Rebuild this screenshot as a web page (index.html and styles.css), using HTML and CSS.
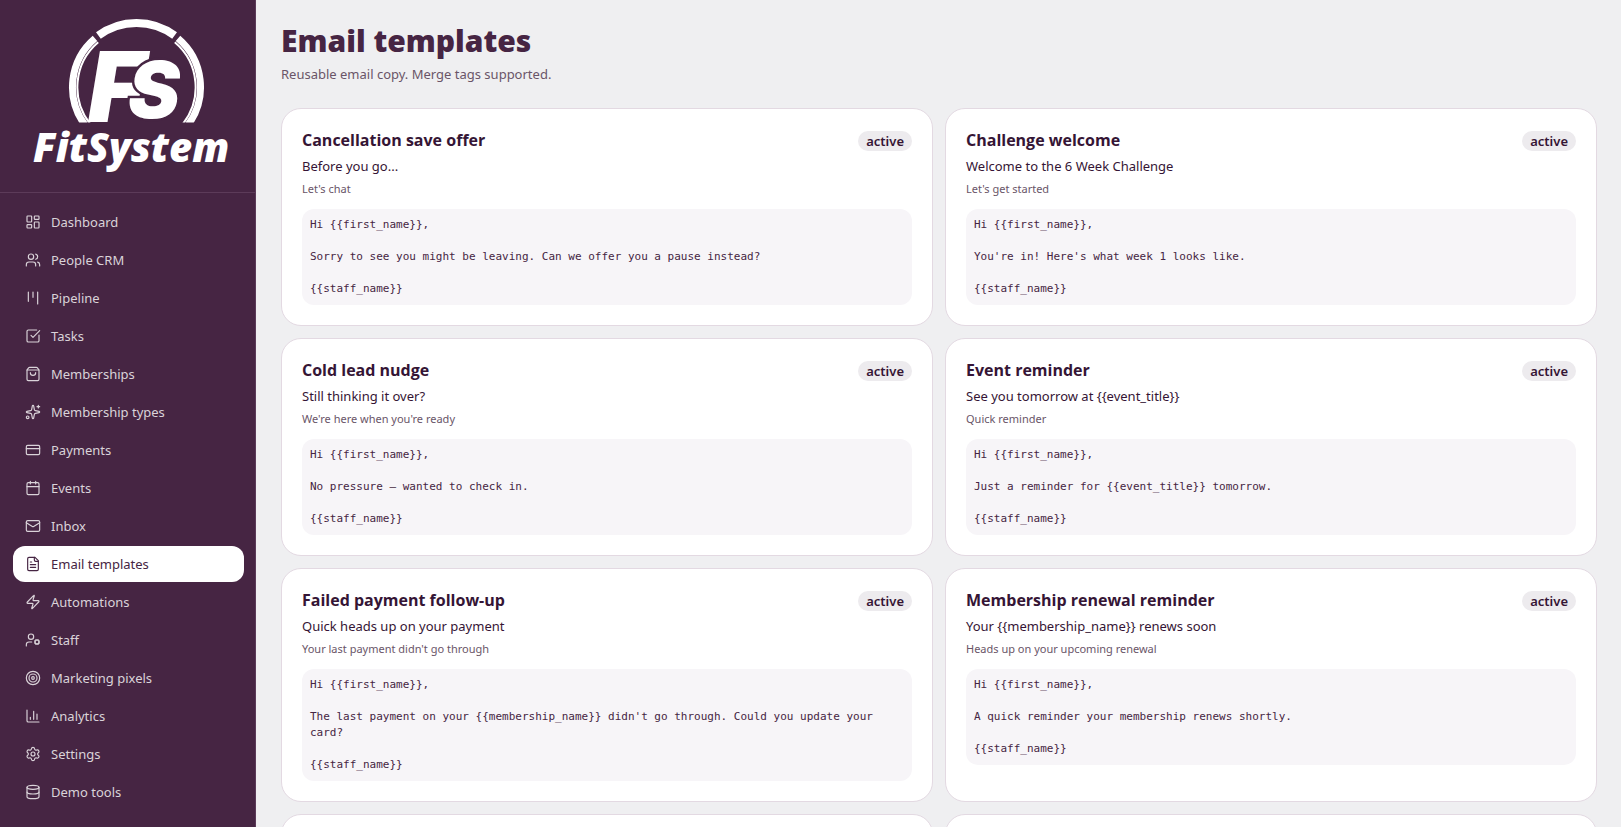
FILE: index.html
```html
<!DOCTYPE html>
<html lang="en">
<head>
    <meta charset="UTF-8">
    <meta name="viewport" content="width=device-width, initial-scale=1.0">
    <title>Email templates - FitSystem</title>
    <link rel="stylesheet" href="styles.css">
</head>
<body>

    <div class="app">
        <aside class="sidebar">
            <div class="brand">
                <svg class="logo" viewBox="32 16 196 156" role="img" aria-label="FitSystem">
                    <clipPath id="ring-cut"><rect x="60" y="10" width="155" height="112.5"/></clipPath>
                    <g clip-path="url(#ring-cut)" fill="none" stroke="#fff">
                        <path stroke-width="8" d="M98.4 35.5A64 64 0 0 1 174.6 35.5"/>
                        <path stroke-width="7" d="M95 38.3A64 64 0 0 0 84.7 124.6M178 38.3A64 64 0 0 1 188.3 124.6"/>
                        <path stroke-width="2" d="M98.2 42.3A59 59 0 0 0 91 125M174.8 42.3A59 59 0 0 1 182 125"/>
                    </g>
                    <text class="logo-mark" x="88" y="122">F<tspan class="logo-s" x="128" y="118">S</tspan></text>
                    <text class="logo-word" x="33" y="162">FitSystem</text>
                </svg>
            </div>
            <nav class="nav">
                <a class="nav-link" href="#">
                    <svg class="icon" viewBox="0 0 24 24"><rect width="7" height="9" x="3" y="3" rx="1"/><rect width="7" height="5" x="14" y="3" rx="1"/><rect width="7" height="9" x="14" y="12" rx="1"/><rect width="7" height="5" x="3" y="16" rx="1"/></svg>
                    Dashboard
                </a>
                <a class="nav-link" href="#">
                    <svg class="icon" viewBox="0 0 24 24"><path d="M16 21v-2a4 4 0 0 0-4-4H6a4 4 0 0 0-4 4v2"/><circle cx="9" cy="7" r="4"/><path d="M22 21v-2a4 4 0 0 0-3-3.87M16 3.13a4 4 0 0 1 0 7.75"/></svg>
                    People CRM
                </a>
                <a class="nav-link" href="#">
                    <svg class="icon" viewBox="0 0 24 24"><path d="M5 3v14M12 3v8M19 3v18"/></svg>
                    Pipeline
                </a>
                <a class="nav-link" href="#">
                    <svg class="icon" viewBox="0 0 24 24"><path d="M21 10.5V19a2 2 0 0 1-2 2H5a2 2 0 0 1-2-2V5a2 2 0 0 1 2-2h12.5"/><path d="m9 11 3 3L22 4"/></svg>
                    Tasks
                </a>
                <a class="nav-link" href="#">
                    <svg class="icon" viewBox="0 0 24 24"><path d="M16 10a4 4 0 0 1-8 0M3.103 6.034h17.794"/><path d="M3.4 5.467a2 2 0 0 0-.4 1.2V20a2 2 0 0 0 2 2h14a2 2 0 0 0 2-2V6.667a2 2 0 0 0-.4-1.2l-2-2.667A2 2 0 0 0 17 2H7a2 2 0 0 0-1.6.8z"/></svg>
                    Memberships
                </a>
                <a class="nav-link" href="#">
                    <svg class="icon" viewBox="0 0 24 24"><path d="M11.017 2.814a1 1 0 0 1 1.966 0l1.051 5.558a2 2 0 0 0 1.594 1.594l5.558 1.051a1 1 0 0 1 0 1.966l-5.558 1.051a2 2 0 0 0-1.594 1.594l-1.051 5.558a1 1 0 0 1-1.966 0l-1.051-5.558a2 2 0 0 0-1.594-1.594l-5.558-1.051a1 1 0 0 1 0-1.966l5.558-1.051a2 2 0 0 0 1.594-1.594z"/><path d="M20 2v4M22 4h-4"/><circle cx="4" cy="20" r="2"/></svg>
                    Membership types
                </a>
                <a class="nav-link" href="#">
                    <svg class="icon" viewBox="0 0 24 24"><rect width="20" height="14" x="2" y="5" rx="2"/><path d="M2 10h20"/></svg>
                    Payments
                </a>
                <a class="nav-link" href="#">
                    <svg class="icon" viewBox="0 0 24 24"><path d="M8 2v4M16 2v4"/><rect width="18" height="18" x="3" y="4" rx="2"/><path d="M3 10h18"/></svg>
                    Events
                </a>
                <a class="nav-link" href="#">
                    <svg class="icon" viewBox="0 0 24 24"><rect width="20" height="16" x="2" y="4" rx="2"/><path d="m22 7-8.991 5.727a2 2 0 0 1-2.009 0L2 7"/></svg>
                    Inbox
                </a>
                <a class="nav-link active" href="#" aria-current="page">
                    <svg class="icon" viewBox="0 0 24 24"><path d="M15 2H6a2 2 0 0 0-2 2v16a2 2 0 0 0 2 2h12a2 2 0 0 0 2-2V7z"/><path d="M14 2v4a2 2 0 0 0 2 2h4M10 9H8M16 13H8M16 17H8"/></svg>
                    Email templates
                </a>
                <a class="nav-link" href="#">
                    <svg class="icon" viewBox="0 0 24 24"><path d="M4 14a1 1 0 0 1-.78-1.63l9.9-10.2a.5.5 0 0 1 .86.46l-1.92 6.02A1 1 0 0 0 13 10h7a1 1 0 0 1 .78 1.63l-9.9 10.2a.5.5 0 0 1-.86-.46l1.92-6.02A1 1 0 0 0 11 14z"/></svg>
                    Automations
                </a>
                <a class="nav-link" href="#">
                    <svg class="icon" viewBox="0 0 24 24"><path d="M10 15H6a4 4 0 0 0-4 4v2"/><circle cx="9" cy="7" r="4"/><circle cx="18" cy="15" r="3"/><path d="m14.305 16.53.923-.382M15.228 13.852l-.923-.383M16.852 12.228l-.383-.923M16.852 17.772l-.383.924M19.148 12.228l.383-.923M19.53 18.696l-.382-.924M20.772 13.852l.924-.383M20.772 16.148l.924.383"/></svg>
                    Staff
                </a>
                <a class="nav-link" href="#">
                    <svg class="icon" viewBox="0 0 24 24"><circle cx="12" cy="12" r="10"/><circle cx="12" cy="12" r="6"/><circle cx="12" cy="12" r="2"/></svg>
                    Marketing pixels
                </a>
                <a class="nav-link" href="#">
                    <svg class="icon" viewBox="0 0 24 24"><path d="M3 3v16a2 2 0 0 0 2 2h16M18 17V9M13 17V5M8 17v-3"/></svg>
                    Analytics
                </a>
                <a class="nav-link" href="#">
                    <svg class="icon" viewBox="0 0 24 24"><path d="M9.671 4.136a2.34 2.34 0 0 1 4.659 0 2.34 2.34 0 0 0 3.319 1.915 2.34 2.34 0 0 1 2.33 4.033 2.34 2.34 0 0 0 0 3.831 2.34 2.34 0 0 1-2.33 4.033 2.34 2.34 0 0 0-3.319 1.915 2.34 2.34 0 0 1-4.659 0 2.34 2.34 0 0 0-3.32-1.915 2.34 2.34 0 0 1-2.33-4.033 2.34 2.34 0 0 0 0-3.831A2.34 2.34 0 0 1 6.35 6.051a2.34 2.34 0 0 0 3.319-1.915"/><circle cx="12" cy="12" r="3"/></svg>
                    Settings
                </a>
                <a class="nav-link" href="#">
                    <svg class="icon" viewBox="0 0 24 24"><ellipse cx="12" cy="5" rx="9" ry="3"/><path d="M3 5v14a9 3 0 0 0 18 0V5"/><path d="M3 12a9 3 0 0 0 18 0"/></svg>
                    Demo tools
                </a>
            </nav>
        </aside>

        <main class="main">
            <header class="page-header">
                <h1>Email templates</h1>
                <p>Reusable email copy. Merge tags supported.</p>
            </header>

            <div class="templates">
                <article class="card">
                    <div class="card-top">
                        <h2>Cancellation save offer</h2>
                        <span class="badge">active</span>
                    </div>
                    <p class="subject">Before you go...</p>
                    <p class="preview">Let's chat</p>
                    <pre class="body">Hi {{first_name}},

Sorry to see you might be leaving. Can we offer you a pause instead?

{{staff_name}}</pre>
                </article>

                <article class="card">
                    <div class="card-top">
                        <h2>Challenge welcome</h2>
                        <span class="badge">active</span>
                    </div>
                    <p class="subject">Welcome to the 6 Week Challenge</p>
                    <p class="preview">Let's get started</p>
                    <pre class="body">Hi {{first_name}},

You're in! Here's what week 1 looks like.

{{staff_name}}</pre>
                </article>

                <article class="card">
                    <div class="card-top">
                        <h2>Cold lead nudge</h2>
                        <span class="badge">active</span>
                    </div>
                    <p class="subject">Still thinking it over?</p>
                    <p class="preview">We're here when you're ready</p>
                    <pre class="body">Hi {{first_name}},

No pressure — wanted to check in.

{{staff_name}}</pre>
                </article>

                <article class="card">
                    <div class="card-top">
                        <h2>Event reminder</h2>
                        <span class="badge">active</span>
                    </div>
                    <p class="subject">See you tomorrow at {{event_title}}</p>
                    <p class="preview">Quick reminder</p>
                    <pre class="body">Hi {{first_name}},

Just a reminder for {{event_title}} tomorrow.

{{staff_name}}</pre>
                </article>

                <article class="card">
                    <div class="card-top">
                        <h2>Failed payment follow-up</h2>
                        <span class="badge">active</span>
                    </div>
                    <p class="subject">Quick heads up on your payment</p>
                    <p class="preview">Your last payment didn't go through</p>
                    <pre class="body">Hi {{first_name}},

The last payment on your {{membership_name}} didn't go through. Could you update your card?

{{staff_name}}</pre>
                </article>

                <article class="card">
                    <div class="card-top">
                        <h2>Membership renewal reminder</h2>
                        <span class="badge">active</span>
                    </div>
                    <p class="subject">Your {{membership_name}} renews soon</p>
                    <p class="preview">Heads up on your upcoming renewal</p>
                    <pre class="body">Hi {{first_name}},

A quick reminder your membership renews shortly.

{{staff_name}}</pre>
                </article>

                <article class="card"></article>
                <article class="card"></article>
            </div>
        </main>
    </div>

</body>
</html>
```
FILE: styles.css
```css
* {
    box-sizing: border-box;
    margin: 0;
    padding: 0;
}

body {
    font-family: "Noto Sans", sans-serif;
    font-size: 13px;
    line-height: 20px;
    color: #351535;
    background: #efeff1;
}

.app {
    display: flex;
    height: 100vh;
    overflow: hidden;
}

/* Sidebar */
.sidebar {
    flex: none;
    width: 256px;
    background: #462543;
    border-right: 1px solid #5c3b59;
    overflow: hidden;
}

.brand {
    padding: 16px 27px 20px 32px;
    border-bottom: 1px solid #5c3b59;
}

.logo {
    display: block;
    width: 196px;
    height: 156px;
    fill: #fff;
}

.logo-mark {
    font-family: Inter, sans-serif;
    font-size: 98px;
    font-style: italic;
    font-weight: 900;
}

/* dark outline keeps the S apart from the F behind it */
.logo-s {
    font-size: 78px;
    stroke: #462543;
    stroke-width: 5px;
    paint-order: stroke;
}

.logo-word {
    font-size: 40px;
    font-style: italic;
    font-weight: 900;
}

.nav {
    display: flex;
    flex-direction: column;
    gap: 2px;
    padding: 11px 11px 11px 13px;
}

.nav-link {
    display: flex;
    align-items: center;
    gap: 10px;
    height: 36px;
    padding: 0 12px;
    border-radius: 12px;
    color: #dad3d9;
    text-decoration: none;
}

.nav-link.active {
    background: #fff;
    color: #462543;
}

.icon {
    width: 16px;
    height: 16px;
    fill: none;
    stroke: currentColor;
    stroke-width: 1.75;
    stroke-linecap: round;
    stroke-linejoin: round;
}

/* Page */
.main {
    flex: 1;
    min-width: 0;
    padding: 24px 24px 24px 25px;
    overflow-y: auto;
    scrollbar-width: none;
}

.page-header {
    margin-bottom: 24px;
}

h1 {
    font-family: "Open Sans", sans-serif;
    font-size: 30px;
    line-height: 34px;
    font-weight: 800;
    color: #462543;
}

.page-header p {
    margin-top: 6px;
    color: #6a5568;
}

.templates {
    display: grid;
    grid-template-columns: repeat(2, minmax(0, 1fr));
    gap: 12px;
}

.card {
    min-height: 218px;
    padding: 20px;
    background: #fff;
    border: 1px solid #e3d9e2;
    border-radius: 20px;
}

.card-top {
    display: flex;
    align-items: flex-end;
    justify-content: space-between;
    padding-bottom: 2px;
}

h2 {
    font-family: "Open Sans", sans-serif;
    font-size: 16px;
    line-height: 22px;
    font-weight: 700;
}

.badge {
    padding: 0 8px;
    border-radius: 10px;
    background: #edebee;
    font-size: 13px;
    font-weight: 600;
}

.subject {
    margin-top: 4px;
    line-height: 18px;
}

.preview {
    margin-top: 6px;
    font-size: 11px;
    line-height: 16px;
    color: #6a5568;
}

.body {
    margin-top: 12px;
    padding: 8px;
    border-radius: 12px;
    background: #f7f5f8;
    font-family: "DejaVu Sans Mono", monospace;
    font-size: 11px;
    line-height: 16px;
    color: #462543;
    white-space: pre-wrap;
}
```
